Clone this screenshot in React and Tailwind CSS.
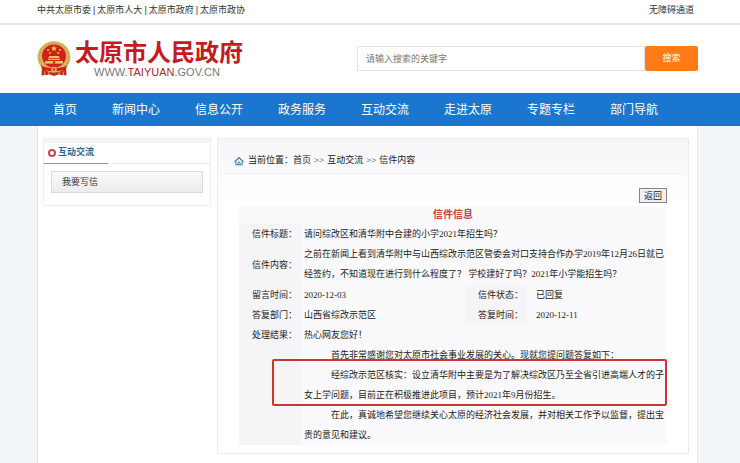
const topLinks = ['中共太原市委', '太原市人大', '太原市政府', '太原市政协']

const navItems = ['首页', '新闻中心', '信息公开', '政务服务', '互动交流', '走进太原', '专题专栏', '部门导航']

const labelCell = 'bg-[#f5f4f7] pl-[13px] text-left font-normal whitespace-nowrap'
const valueCell = 'pl-[3px] text-left'

function Emblem() {
  return (
    <svg viewBox="0 0 34 36" className="w-[34px] h-9 shrink-0" aria-hidden="true">
      <path d="M5 24 L29 24 L29.5 34.5 L21 33.5 L17 35 L13 33.5 L4.5 34.5 Z" fill="#c22a1f" />
      <ellipse cx="17" cy="16" rx="16.5" ry="15.7" fill="#d8b362" />
      <ellipse cx="17" cy="16" rx="14.4" ry="13.8" fill="none" stroke="#b98a3c" strokeWidth="1" strokeDasharray="1 2" />
      <ellipse cx="17" cy="15" rx="12" ry="11.6" fill="#cf2219" />
      <path d="M17 4.5 l.9 1.9 2.1.2 -1.6 1.4 .5 2.1 -1.9-1.1 -1.9 1.1 .5-2.1 -1.6-1.4 2.1-.2z" fill="#f5cf5c" />
      <g fill="#f0c75a">
        <circle cx="11" cy="9" r="1" />
        <circle cx="12.8" cy="12" r="1" />
        <circle cx="21.2" cy="12" r="1" />
        <circle cx="23" cy="9" r="1" />
        <path d="M12.5 15 L21.5 15 L23 17 L11 17 Z" />
        <path d="M11 17.8h12v1.2h-12z" />
        <path d="M8 20h18v2.6h-18z" />
      </g>
      <path d="M16 20.6h2v2h-2z" fill="#b21f17" />
      <path d="M4 24.5 C10 28 24 28 30 24.5 L29 28 C23 31 11 31 5 28 Z" fill="#cf2219" />
      <circle cx="17" cy="28.5" r="2.8" fill="#dcb04f" />
      <circle cx="17" cy="28.5" r="1.1" fill="#b3331f" />
      <path d="M8 30.5 L7.5 34 M12 31 L11.5 34 M22 31 L22.5 34 M26 30.5 L26.5 34" stroke="#dcb04f" strokeWidth="1" />
    </svg>
  )
}

function HomeIcon() {
  return (
    <svg viewBox="0 0 10 10" className="w-[10px] h-[10px]" fill="none" stroke="#2e7fae" aria-hidden="true">
      <path d="M0.6 6 L5 1.6 L9.4 6" strokeWidth="1.2" />
      <path d="M1.8 5.8 V8.8 H8.2 V5.8" strokeWidth="1" />
      <path d="M4 8.6 V6.2 H6 V8.6" strokeWidth="0.9" />
    </svg>
  )
}

function Header() {
  return (
    <header className="bg-white">
      <div className="flex justify-between h-[25px] pl-[37px] pr-[46px] border-b-2 border-[#e6e6e6] leading-[21px] text-[#333]">
        <div className="flex gap-[2px]">
          {topLinks.map((link, i) => (
            <span key={link} className="flex gap-[2px]">
              {i > 0 && <span>|</span>}
              <a href="#">{link}</a>
            </span>
          ))}
        </div>
        <a href="#">无障碍通道</a>
      </div>

      <div className="flex items-start justify-between h-[68px] pl-[37px] pr-[42px]">
        <a href="#" className="flex gap-1 pt-4">
          <Emblem />
          <span className="flex flex-col gap-[2px]">
            <span className="text-2xl leading-6 font-bold text-[#c8191f]">太原市人民政府</span>
            <span className="pl-[19px] text-[11px] leading-[10px] text-[#777]">
              WWW.<span className="text-[#b5262b]">TAIYUAN</span>.GOV.CN
            </span>
          </span>
        </a>
        <form className="flex w-[341px] pt-[21px]" onSubmit={e => e.preventDefault()}>
          <input
            type="text"
            aria-label="搜索"
            placeholder="请输入搜索的关键字"
            className="flex-1 min-w-0 h-[25px] px-2 border border-[#e4e4e4] placeholder:text-[#777]"
          />
          <button type="submit" className="w-[53px] h-[25px] rounded-xs bg-[#ff7b18] text-white">搜索</button>
        </form>
      </div>

      <nav className="flex gap-[35px] h-[33px] pl-[53px] bg-[#1a76cf] text-xs leading-[35px] text-white">
        {navItems.map(item => (
          <a key={item} href="#" className="whitespace-nowrap">{item}</a>
        ))}
      </nav>
    </header>
  )
}

function Sidebar() {
  return (
    <aside className="w-[168px] shrink-0 self-start border border-[#eeeef0] bg-white">
      <div className="border-t-4 border-[#f5f4f5]" />
      <div className="flex h-[21px] border-b border-[#ededf0]">
        <h2 className="flex items-center gap-[2px] w-16 h-[21px] pl-1 border-b border-[#8e99a3] font-bold text-[#2a6797] whitespace-nowrap">
          <span className="w-2 h-2 rounded-full border-2 border-[#cc4450]" />
          互动交流
        </h2>
      </div>
      <div className="px-[7px] pt-[7px] pb-3">
        <a
          href="#"
          className="block h-[22px] pl-[10px] border border-[#d9d9dc] bg-linear-to-b from-[#fafafa] to-[#ececee] leading-5 text-[#333]"
        >
          我要写信
        </a>
      </div>
    </aside>
  )
}

function LetterTable() {
  return (
    <table className="w-full table-fixed bg-[#faf9fc] leading-5">
      <colgroup>
        <col className="w-[62px]" />
        <col />
        <col className="w-[62px]" />
        <col className="w-[140px]" />
      </colgroup>
      <thead>
        <tr>
          <th colSpan={4} className="h-[18px] p-0 text-[10px] leading-[18px] font-bold text-[#cf3b3b]">信件信息</th>
        </tr>
      </thead>
      <tbody>
        <tr>
          <th scope="row" className={labelCell}>信件标题：</th>
          <td colSpan={3} className={valueCell}>请问综改区和清华附中合建的小学2021年招生吗？</td>
        </tr>
        <tr>
          <th scope="row" className={labelCell}>信件内容：</th>
          <td colSpan={3} className={`${valueCell} pb-px`}>
            之前在新闻上看到清华附中与山西综改示范区管委会对口支持合作办学2019年12月26日就已经签约，不知道现在进行到什么程度了？ 学校建好了吗？2021年小学能招生吗？
          </td>
        </tr>
        <tr>
          <th scope="row" className={labelCell}>留言时间：</th>
          <td className={valueCell}>2020-12-03</td>
          <th scope="row" className={labelCell}>信件状态：</th>
          <td className="pl-[9px]">已回复</td>
        </tr>
        <tr>
          <th scope="row" className={labelCell}>答复部门：</th>
          <td className={valueCell}>山西省综改示范区</td>
          <th scope="row" className={labelCell}>答复时间：</th>
          <td className="pl-[9px]">2020-12-11</td>
        </tr>
        <tr>
          <th scope="row" className={`${labelCell} align-top`}>处理结果：</th>
          <td colSpan={3} className={valueCell}>
            <p>热心网友您好！</p>
            <p className="indent-[27px]">首先非常感谢您对太原市社会事业发展的关心。现就您提问题答复如下：</p>
            <div className="relative">
              <p className="indent-[27px]">
                经综改示范区核实：设立清华附中主要是为了解决综改区乃至全省引进高端人才的子女上学问题，目前正在积极推进此项目，预计2021年9月份招生。
              </p>
              <div className="absolute -top-[6px] -bottom-px -left-[32px] right-0 rounded-xs border-2 border-[#cb352f]" />
            </div>
            <p className="indent-[27px]">
              在此，真诚地希望您继续关心太原的经济社会发展，并对相关工作予以监督，提出宝贵的意见和建议。
            </p>
          </td>
        </tr>
      </tbody>
    </table>
  )
}

function Letter() {
  return (
    <main className="flex-1 min-w-0 border border-[#ececef] bg-white font-['Liberation_Serif','Noto_Sans_CJK_SC',serif] text-[#222]">
      <div className="px-[6px] bg-linear-to-b from-[#f6f5f6] to-[#fbfafd]">
        <div className="flex items-center gap-1 h-[35px] pl-[10px] pt-[10px] border-b border-[#efeef1]">
          <HomeIcon />
          <div className="flex gap-[3px]">
            <span>当前位置：<a href="#">首页</a></span>
            <span>&gt;&gt;</span>
            <a href="#">互动交流</a>
            <span>&gt;&gt;</span>
            <span>信件内容</span>
          </div>
        </div>
      </div>
      <div className="px-[21px] pb-2 bg-linear-to-b from-[#fcfbfe] to-white to-10%">
        <div className="flex justify-end pt-[14px] pb-[3px]">
          <button type="button" className="w-7 h-[15px] border border-[#85858a] bg-[#f0f0f1] leading-3">返回</button>
        </div>
        <LetterTable />
      </div>
    </main>
  )
}

export default function App() {
  return (
    <div
      lang="zh-CN"
      className="min-h-screen bg-[#f3f6f8] font-['Liberation_Sans','Noto_Sans_CJK_SC',sans-serif] text-[9px]"
    >
      <Header />
      <div className="ml-[37px] mr-[42px] min-h-[337px] flex gap-[6px] pl-[5px] pr-2 pt-3 pb-[9px] border-x border-[#e4e6e8] bg-white">
        <Sidebar />
        <Letter />
      </div>
    </div>
  )
}
